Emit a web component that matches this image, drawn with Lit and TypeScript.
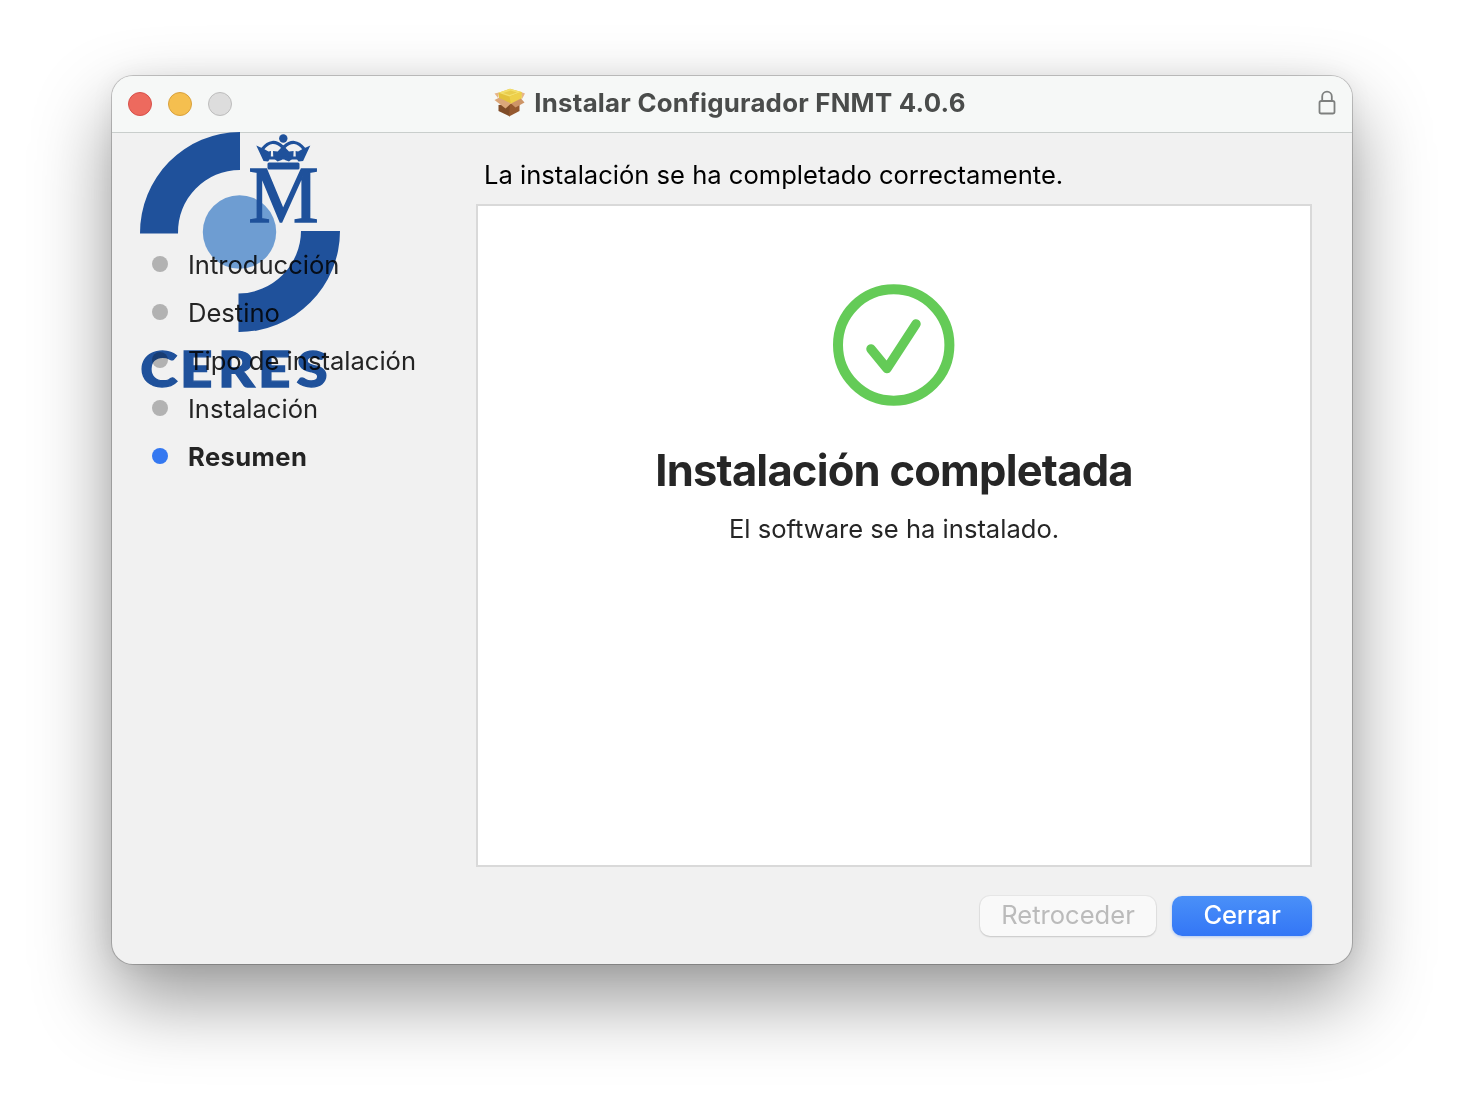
import { LitElement, html, css } from "lit";
import { customElement } from "lit/decorators.js";

interface Step {
  label: string;
  active?: boolean;
}

const STEPS: Step[] = [
  { label: "Introducción" },
  { label: "Destino" },
  { label: "Tipo de instalación" },
  { label: "Instalación" },
  { label: "Resumen", active: true },
];

@customElement("ceres-logo")
export class CeresLogo extends LitElement {
  static styles = css`
    :host { display: block; width: 204px; height: 260px; }
    svg { display: block; overflow: visible; }
    .word { font: 900 50px Lato, "Open Sans", sans-serif; }
    .emblem { font: 400 81px "Liberation Serif", serif; }
  `;

  render() {
    return html`
      <svg width="204" height="260" viewBox="138 130 204 260">
        <path fill="#1f519b" d="M240 132A100 101 0 0 0 140 233.500H178A62 62 0 0 1 240 170Z" />
        <path fill="#1f519b" d="M340 231A101 101 0 0 1 238.500 332V293.500A63 63 0 0 0 301 231Z" />
        <circle cx="239.500" cy="232" r="36.700" fill="#6e9dd2" />
        <g fill="#1f519b">
          <circle cx="283.300" cy="138.500" r="4.200" />
          <path d="M256.300 145.500L264 149L268.500 151.500L271 151L270.800 158L268 161.500L263.500 161Z" />
          <path d="M310.300 145.500L302.600 149L298.100 151.500L295.600 151L295.800 158L298.600 161.500L303.100 161Z" />
          <path d="M283.300 145.500L289 151.500L293.600 151L293.300 158L289 161.500L285 160L283.300 157.500L281.600 160L277.600 161.500L273.300 158L273 151L277.600 151.500Z" />
          <rect x="270" y="156.500" width="27" height="3" />
          <rect x="267.500" y="162.500" width="32" height="7" rx="1.500" />
        </g>
        <path d="M262.500 149Q272 137 282.500 147M304.100 149Q294.600 137 284.100 147" fill="none" stroke="#1f519b" stroke-width="3.200" />
        <text class="emblem" x="248.500" y="222" textLength="70" lengthAdjust="spacingAndGlyphs" fill="#1f519b" stroke="#1f519b" stroke-width="1.600">M</text>
        <g transform="translate(140 387) scale(1.13 1)">
          <text class="word" x="0.200 35.400 69 104.400 138.600" y="0" fill="#1f519b" stroke="#1f519b" stroke-width="1.300">CERES</text>
        </g>
      </svg>
    `;
  }
}

@customElement("app-root")
export class AppRoot extends LitElement {
  static styles = css`
    :host {
      display: block;
      width: 1464px;
      height: 1112px;
      box-sizing: border-box;
      padding: 76px 112px 148px;
      background: #fff;
      overflow: hidden;
      font-family: Inter, "Liberation Sans", sans-serif;
      font-size: 25.57px;
      line-height: 32px;
      color: #262626;
    }
    * { box-sizing: border-box; }
    .window {
      height: 888px;
      display: flex;
      flex-direction: column;
      border-radius: 21px;
      background: #f1f1f1;
      box-shadow: 0 0 0 1px rgba(0, 0, 0, 0.2), 0 0 24px rgba(0, 0, 0, 0.06), 0 35px 78px rgba(0, 0, 0, 0.41);
    }
    .titlebar {
      flex: none;
      height: 57px;
      display: grid;
      grid-template-columns: 140px 1fr 140px;
      align-items: center;
      padding: 0 16px;
      background: #f6f8f7;
      border-bottom: 1px solid #c9cecc;
      border-radius: 21px 21px 0 0;
    }
    .lights { display: flex; gap: 16px; }
    .light { width: 24px; height: 24px; border-radius: 50%; border: 1px solid; }
    .close { background: #ed6a5e; border-color: #d8504a; }
    .minimize { background: #f5bf4f; border-color: #d9a13c; }
    .zoom { background: #dddddd; border-color: #bdbdbd; }
    .title {
      display: flex;
      align-items: center;
      justify-content: center;
      gap: 8px;
      padding: 0 4px 3px 0;
      font-weight: 700;
      color: #4a4c4b;
      white-space: nowrap;
      font-size: 25.8px;
      letter-spacing: 0.25px;
    }
    .title svg { display: block; }
    .lock { display: block; justify-self: end; margin-bottom: 2px; }
    .body { flex: 1; display: flex; min-height: 0; }
    .sidebar { flex: none; width: 364px; display: grid; grid-template-rows: 107px auto 1fr; }
    ceres-logo { grid-area: 1 / 1 / 4 / 2; margin: -3px 0 0 26px; }
    .steps {
      grid-area: 2 / 1;
      z-index: 1;
      display: flex;
      flex-direction: column;
      margin: 0;
      padding: 0 0 0 40px;
      list-style: none;
      mix-blend-mode: multiply;
    }
    .step { display: flex; align-items: center; gap: 20px; height: 48px; white-space: nowrap; }
    .dot { width: 16px; height: 16px; border-radius: 50%; background: #bdbdbd; }
    .label { padding-top: 1px; }
    .active .label { font-weight: 700; letter-spacing: 0.4px; }
    .active .dot { background: #377fff; }
    .main { flex: 1; display: flex; flex-direction: column; padding: 0 40px 28px 0; }
    .heading { margin: 0; padding: 26px 0 0 8px; height: 71px; color: #000; white-space: nowrap; }
    .pane {
      width: 836px;
      height: 663px;
      border: 2px solid #d9d9d9;
      background: #fff;
      display: flex;
      flex-direction: column;
      align-items: center;
      padding-top: 77px;
    }
    .check { display: block; flex: none; }
    .done { margin: 36px 0 0; font-size: 43.5px; line-height: 54px; font-weight: 700; letter-spacing: -0.78px; white-space: nowrap; }
    .detail { margin: 16px 0 0; white-space: nowrap; }
    .actions { display: flex; justify-content: flex-end; gap: 16px; margin-top: 29px; }
    .button {
      height: 40px;
      border: 0;
      padding: 0 0 2px;
      border-radius: 10px;
      font: inherit;
      line-height: 36px;
    }
    .back { width: 176px; background: #f9f9f9; color: #bbb; box-shadow: 0 0 0 1px rgba(0, 0, 0, 0.04), 0 1px 2px rgba(0, 0, 0, 0.14); }
    .primary { width: 140px; background: linear-gradient(#4a90f8, #3376f6); color: #fff; font-weight: 500; letter-spacing: -0.15px; box-shadow: 0 1px 3px rgba(52, 120, 246, 0.35); }
  `;

  render() {
    return html`
      <section class="window">
        <header class="titlebar">
          <div class="lights">
            <span class="light close"></span>
            <span class="light minimize"></span>
            <span class="light zoom"></span>
          </div>
          <div class="title">
            <svg width="32" height="30" viewBox="0 0 32 30">
              <path d="M4.500 17L16 16V28.500L4.500 23Z" fill="#7f4c27" />
              <path d="M16 16H25.500V23L15 28.500Z" fill="#95592f" />
              <path d="M0.500 5.500L5 4.500L4 10ZM27 4L31 5.500L28 11Z" fill="#e6b488" />
              <path d="M4.500 4.700L16 0.800L27.500 4V10.500L17 16L5 11Z" fill="#e3c13b" />
              <path d="M4.500 4.700L16 0.800L27.500 4L15.500 8.500Z" fill="#f3df6c" />
              <path d="M9 5L16.500 2.600L23 4.400L15.500 7Z" fill="#e9cd4c" />
              <path d="M15.500 8.500L27.500 4V10.500L17 16Z" fill="#eed04a" />
              <path d="M0.500 12L5 9.800L17 15.500L11.500 20.500Z" fill="#dba779" />
              <path d="M17 15.500L27 10.500L30.500 14.500L21.500 19.500Z" fill="#cd9567" />
            </svg>
            <span class="caption">Instalar Configurador FNMT 4.0.6</span>
          </div>
          <svg class="lock" width="18" height="26" viewBox="0 0 18 26" fill="none" stroke="#7e807f" stroke-width="1.800">
            <rect x="1.500" y="11" width="15" height="12.500" rx="1.800" />
            <path d="M4.200 11V6.500a4.800 4.800 0 0 1 9.600 0V11" />
          </svg>
        </header>
        <div class="body">
          <nav class="sidebar">
            <ceres-logo></ceres-logo>
            <ul class="steps">
              ${STEPS.map(
                (s) => html`<li class="step ${s.active ? "active" : ""}"><span class="dot"></span><span class="label">${s.label}</span></li>`
              )}
            </ul>
          </nav>
          <main class="main">
            <p class="heading"><span>La instalación se ha completado correctamente.</span></p>
            <div class="pane">
              <svg class="check" width="124" height="124" viewBox="0 0 124 124" fill="none" stroke="#64cb57">
                <circle cx="61.700" cy="62" r="55.700" stroke-width="10" />
                <path d="M39 66L55 85.500L84 41" stroke-width="9.500" stroke-linecap="round" stroke-linejoin="round" />
              </svg>
              <h1 class="done">Instalación completada</h1>
              <p class="detail">El software se ha instalado.</p>
            </div>
            <div class="actions">
              <button class="button back" disabled>Retroceder</button>
              <button class="button primary">Cerrar</button>
            </div>
          </main>
        </div>
      </section>
    `;
  }
}
